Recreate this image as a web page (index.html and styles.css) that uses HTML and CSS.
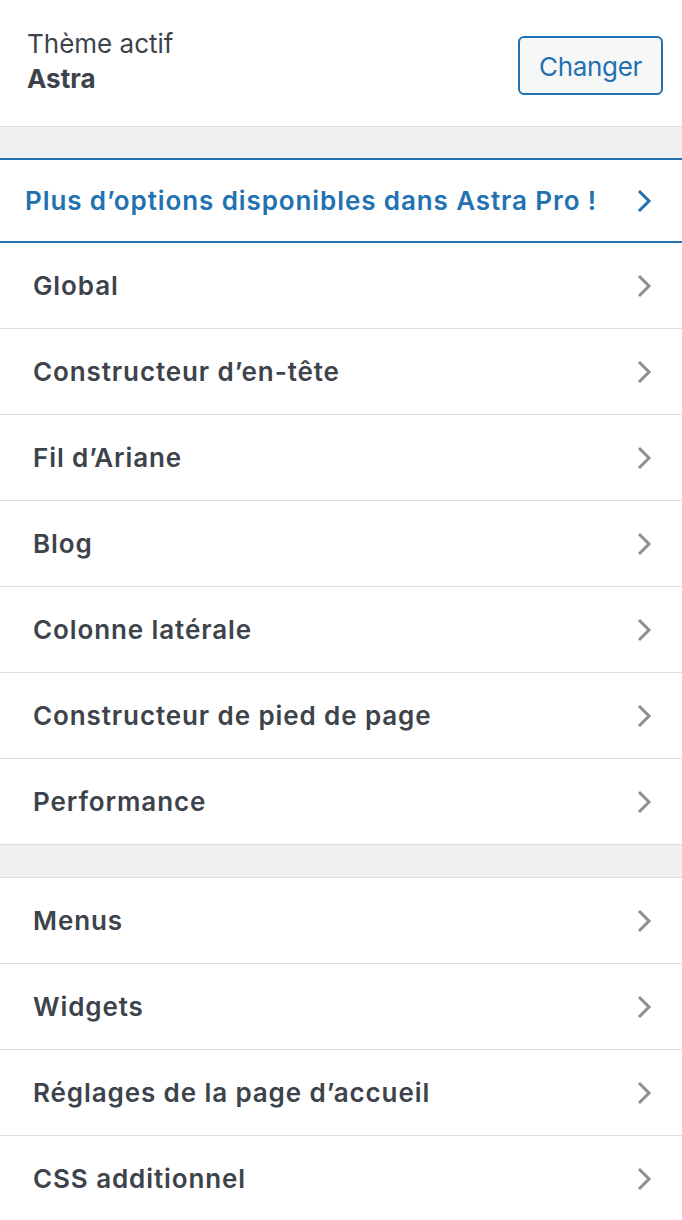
FILE: index.html
```html
<!DOCTYPE html>
<html lang="fr">
<head>
<meta charset="utf-8">
<title>Personnaliser</title>
<link rel="stylesheet" href="styles.css">
</head>
<body>
<div class="panel">
  <div class="info">
    <div class="info-text">
      <div class="info-label">Thème actif</div>
      <div class="info-name">Astra</div>
    </div>
    <button class="btn">Changer</button>
  </div>
  <div class="gap"></div>
  <div class="pro">
    <span class="pro-title">Plus d’options disponibles dans Astra Pro !</span>
    <svg class="chev" viewBox="0 0 16 24" width="16" height="24"><path d="M3 2 L13 12 L3 22" fill="none" stroke="currentColor" stroke-width="3"/></svg>
  </div>
  <ul class="group">
    <li class="row"><span class="title">Global</span><svg class="chev" viewBox="0 0 16 24" width="16" height="24"><path d="M3 2 L13 12 L3 22" fill="none" stroke="currentColor" stroke-width="3"/></svg></li>
    <li class="row"><span class="title">Constructeur d’en-tête</span><svg class="chev" viewBox="0 0 16 24" width="16" height="24"><path d="M3 2 L13 12 L3 22" fill="none" stroke="currentColor" stroke-width="3"/></svg></li>
    <li class="row"><span class="title">Fil d’Ariane</span><svg class="chev" viewBox="0 0 16 24" width="16" height="24"><path d="M3 2 L13 12 L3 22" fill="none" stroke="currentColor" stroke-width="3"/></svg></li>
    <li class="row"><span class="title">Blog</span><svg class="chev" viewBox="0 0 16 24" width="16" height="24"><path d="M3 2 L13 12 L3 22" fill="none" stroke="currentColor" stroke-width="3"/></svg></li>
    <li class="row"><span class="title">Colonne latérale</span><svg class="chev" viewBox="0 0 16 24" width="16" height="24"><path d="M3 2 L13 12 L3 22" fill="none" stroke="currentColor" stroke-width="3"/></svg></li>
    <li class="row"><span class="title">Constructeur de pied de page</span><svg class="chev" viewBox="0 0 16 24" width="16" height="24"><path d="M3 2 L13 12 L3 22" fill="none" stroke="currentColor" stroke-width="3"/></svg></li>
    <li class="row"><span class="title">Performance</span><svg class="chev" viewBox="0 0 16 24" width="16" height="24"><path d="M3 2 L13 12 L3 22" fill="none" stroke="currentColor" stroke-width="3"/></svg></li>
  </ul>
  <div class="gap gap2"></div>
  <ul class="group group2">
    <li class="row"><span class="title">Menus</span><svg class="chev" viewBox="0 0 16 24" width="16" height="24"><path d="M3 2 L13 12 L3 22" fill="none" stroke="currentColor" stroke-width="3"/></svg></li>
    <li class="row"><span class="title">Widgets</span><svg class="chev" viewBox="0 0 16 24" width="16" height="24"><path d="M3 2 L13 12 L3 22" fill="none" stroke="currentColor" stroke-width="3"/></svg></li>
    <li class="row"><span class="title">Réglages de la page d’accueil</span><svg class="chev" viewBox="0 0 16 24" width="16" height="24"><path d="M3 2 L13 12 L3 22" fill="none" stroke="currentColor" stroke-width="3"/></svg></li>
    <li class="row"><span class="title">CSS additionnel</span><svg class="chev" viewBox="0 0 16 24" width="16" height="24"><path d="M3 2 L13 12 L3 22" fill="none" stroke="currentColor" stroke-width="3"/></svg></li>
  </ul>
</div>
</body>
</html>
```

FILE: styles.css
```css
* { box-sizing: border-box; }
html, body { margin: 0; padding: 0; }
body {
  background: #f0f0f1;
  font-family: Inter, "Noto Sans", sans-serif;
  color: #3c434a;
}
.panel {
  width: 682px;
  height: 1220px;
  overflow: hidden;
}
.info {
  height: 127px;
  background: #fff;
  border-bottom: 1px solid #dcdcde;
  display: flex;
  align-items: flex-start;
  justify-content: space-between;
  padding: 26px 19px 0 27px;
}
.info-label {
  font-size: 26px;
  line-height: 35px;
  color: #3c434a;
}
.info-name {
  font-size: 26px;
  line-height: 35px;
  font-weight: 700;
  color: #3c434a;
}
.btn {
  margin-top: 10px;
  width: 145px;
  height: 59px;
  border: 2px solid #2271b1;
  border-radius: 6px;
  background: #f6f7f7;
  color: #2271b1;
  font-family: inherit;
  font-size: 26px;
  letter-spacing: -0.3px;
  padding: 2px 0 0;
}
.gap { height: 31px; }
.gap2 { height: 32px; }
.pro {
  height: 85px;
  background: #fff;
  border-top: 2px solid #2271b1;
  border-bottom: 2px solid #2271b1;
  display: flex;
  align-items: center;
  justify-content: space-between;
  padding: 0 30px 0 25px;
  color: #2271b1;
}
.pro-title {
  font-size: 26px;
  font-weight: 600;
  letter-spacing: 0.9px;
}
.group {
  list-style: none;
  margin: 0;
  padding: 0;
  background: #fff;
}
.group2 { border-top: 1px solid #dcdcde; }
.row {
  height: 86px;
  border-bottom: 1px solid #dcdcde;
  display: flex;
  align-items: center;
  justify-content: space-between;
  padding: 0 30px 0 33px;
}
.title {
  font-size: 26px;
  font-weight: 600;
  letter-spacing: 0.9px;
  color: #3c434a;
}
.row .chev { color: #8c8f94; }
.chev { display: block; }
```
